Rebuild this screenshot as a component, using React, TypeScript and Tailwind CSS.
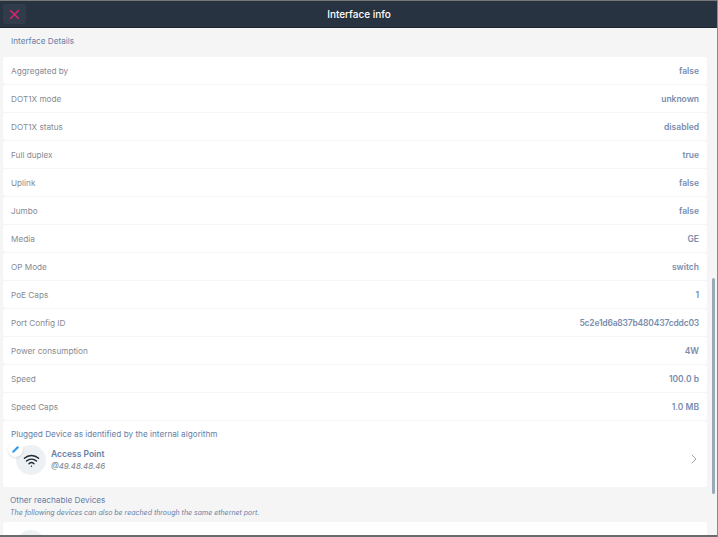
import { ChevronRight, Pencil, Wifi, X } from 'lucide-react'

const ROWS = [
  ['Aggregated by', 'false'],
  ['DOT1X mode', 'unknown'],
  ['DOT1X status', 'disabled'],
  ['Full duplex', 'true'],
  ['Uplink', 'false'],
  ['Jumbo', 'false'],
  ['Media', 'GE'],
  ['OP Mode', 'switch'],
  ['PoE Caps', '1'],
  ['Port Config ID', '5c2e1d6a837b480437cddc03'],
  ['Power consumption', '4W'],
  ['Speed', '100.0 b'],
  ['Speed Caps', '1.0 MB'],
]

export default function App() {
  return (
    <div className="relative h-[537px] w-[718px] overflow-hidden bg-[#f5f5f5] font-['Inter',sans-serif]">
      {/* Header */}
      <div className="relative flex h-[28px] items-center justify-center border-t border-[#777] border-b border-b-[#1a2530] bg-[#273340]">
        <div className="absolute left-[3px] top-[3px] flex h-[20px] w-[23px] items-center justify-center rounded-[3px] bg-[#303c4a]">
          <X size={15} strokeWidth={2.75} className="text-[#d6246e]" />
        </div>
        <span className="text-[10px] font-medium text-white">Interface info</span>
      </div>

      <div className="pl-[3px] pr-[11px]">
        <div className="flex h-[29px] items-center pb-[2px] pl-[8px] text-[8.2px] text-[#6580a8]">Interface Details</div>

        <div className="flex flex-col gap-px">
          {ROWS.map(([label, value]) => (
            <div key={label} className="flex h-[27px] items-center justify-between rounded-[3px] bg-white px-[8px] pt-[2px]">
              <span className="text-[8.2px] text-[#868a92]">{label}</span>
              <span className={value.length > 20 ? 'text-[8.5px] font-semibold tracking-[-0.2px] text-[#7a8dae]' : 'text-[8.5px] font-semibold text-[#7a8dae]'}>{value}</span>
            </div>
          ))}

          {/* Plugged device */}
          <div className="h-[66px] rounded-[3px] bg-white px-[8px] pt-[8px]">
            <div className="text-[8.2px] leading-[10px] text-[#6580a8]">Plugged Device as identified by the internal algorithm</div>
            <div className="mt-[6px] flex items-center">
              <div className="relative ml-[5px] flex h-[30px] w-[30px] items-center justify-center rounded-full bg-[#eef1f3]">
                <Wifi size={17} strokeWidth={2} className="text-[#1f2933]" />
                <div className="absolute -left-[8px] -top-[3px] flex h-[15px] w-[15px] items-center justify-center rounded-full bg-white shadow-sm">
                  <Pencil size={7} strokeWidth={2.5} className="fill-[#2f9bf0] text-[#2f9bf0]" />
                </div>
              </div>
              <div className="ml-[5px] flex-1">
                <div className="text-[8.5px] font-semibold leading-[12px] text-[#6580a8]">Access Point</div>
                <div className="text-[7.8px] font-medium italic leading-[12px] text-[#868a92]">@49.48.48.46</div>
              </div>
              <ChevronRight size={16} strokeWidth={1} className="-mr-[3px] mb-[3px] text-[#6d7680]" />
            </div>
          </div>
        </div>

        <div className="pl-[7px] pt-[8px]">
          <div className="text-[8.2px] leading-[10px] text-[#6580a8]">Other reachable Devices</div>
          <div className="mt-[3px] text-[7px] italic leading-[9px] text-[#6580a8]">The following devices can also be reached through the same ethernet port.</div>
        </div>

        <div className="mt-[5px] h-[40px] rounded-[3px] bg-white pl-[13px] pt-[8px]">
          <div className="h-[30px] w-[30px] rounded-full bg-[#eef1f3]" />
        </div>
      </div>

      {/* Scrollbar */}
      <div className="absolute left-[712px] top-[278px] h-[216px] w-[3px] rounded-full bg-[#9aaab6]" />
      {/* Window edges */}
      <div className="absolute bottom-0 left-0 h-[2px] w-full bg-[#6b6b6b]" />
      <div className="absolute right-0 top-0 h-full w-px bg-[#8a8a8a]" />
    </div>
  )
}
